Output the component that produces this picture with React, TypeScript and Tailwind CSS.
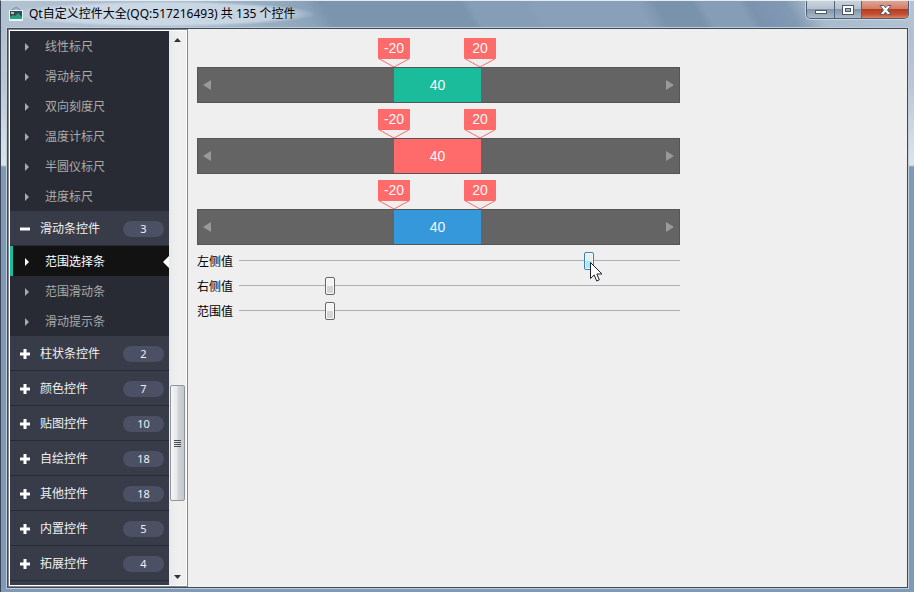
import React from 'react';

type Group = { title: string; count: number; open?: boolean; items?: string[] };

const looseItems = ['线性标尺', '滑动标尺', '双向刻度尺', '温度计标尺', '半圆仪标尺', '进度标尺'];

const groups: Group[] = [
  { title: '滑动条控件', count: 3, open: true, items: ['范围选择条', '范围滑动条', '滑动提示条'] },
  { title: '柱状条控件', count: 2 },
  { title: '颜色控件', count: 7 },
  { title: '贴图控件', count: 10 },
  { title: '自绘控件', count: 18 },
  { title: '其他控件', count: 18 },
  { title: '内置控件', count: 5 },
  { title: '拓展控件', count: 4 },
];

function AppIcon() {
  return (
    <svg width="14" height="14" viewBox="0 0 14 14" className="shrink-0" aria-hidden="true">
      <path d="M1.500 4 6 .8h2L12.500 4" fill="none" stroke="#6c8ba0" strokeWidth="1" />
      <rect x="0" y="3" width="14" height="11" fill="#eef3f5" />
      <rect x="1" y="4" width="12" height="8" fill="#34495e" />
      <rect x="2" y="5" width="3" height="2" fill="#e8c34a" />
      <path d="M1 12v-2l3-2 2 1 3-3 4 4v2z" fill="#1fa67c" />
    </svg>
  );
}

function TitleBar() {
  return (
    <header className="flex h-[26px] shrink-0 items-start justify-between bg-[linear-gradient(60deg,#b3c2d2_0%,#a9bccd_22%,#8ba3ba_34%,#7b95ae_36%,#7b95ae_51%,#869db8_52%,#869db8_58%,#8aa0ba_59%,#8aa0ba_70%,#7a93ad_72%,#7a93ad_76%,#869db7_77%,#869db7_81%,#7b93ae_82%,#8199b3_86%,#a9bccd_89%,#b3c3d2_100%)] pl-2 pr-[5px]">
      <div className="flex h-full items-center gap-1.5 rounded-full bg-[radial-gradient(closest-side,rgba(215,226,238,0.7)_80%,rgba(215,226,238,0))] pr-5 text-xs text-black">
        <AppIcon />
        <h1 className="whitespace-nowrap">Qt自定义控件大全(QQ:517216493) 共 135 个控件</h1>
      </div>
      <div className="flex h-[18px] overflow-hidden rounded-b-[5px] border border-t-0 border-[#4f6074] shadow-[0_0_0_1px_#c9d6e1]">
        <button aria-label="最小化" className="flex w-7 items-center justify-center border-r border-[#52647a] bg-[linear-gradient(#c9d3dd_0%,#b4c1ce_48%,#8496aa_50%,#a9bac9_100%)]">
          <svg width="12" height="18" viewBox="0 0 12 18"><rect x=".5" y="9.500" width="11" height="3" fill="#fff" stroke="#4a586a" /></svg>
        </button>
        <button aria-label="最大化" className="flex w-[27px] items-center justify-center border-r border-[#52647a] bg-[linear-gradient(#c9d3dd_0%,#b4c1ce_48%,#8496aa_50%,#a9bac9_100%)]">
          <svg width="12" height="18" viewBox="0 0 12 18">
            <rect x=".5" y="4.500" width="11" height="9" fill="#fff" stroke="#4a586a" />
            <rect x="3.500" y="7.500" width="5" height="3" fill="#a5b4c4" stroke="#4a586a" />
          </svg>
        </button>
        <button aria-label="关闭" className="flex w-[46px] items-center justify-center bg-[linear-gradient(#e0a593_0%,#d27c66_46%,#b23c21_50%,#c65234_80%,#d98363_100%)]">
          <svg width="13" height="18" viewBox="0 0 13 18">
            <path d="M1 4.500h3.500l2 2.300 2-2.300H12L8.500 9l3.500 4.500H8.500l-2-2.300-2 2.300H1L4.500 9z" fill="#fff" stroke="#565a6c" />
          </svg>
        </button>
      </div>
    </header>
  );
}

function NavItem({ label, active }: { label: string; active?: boolean }) {
  return (
    <button
      aria-current={active ? 'page' : undefined}
      className={
        active
          ? 'flex h-[30px] w-full shrink-0 items-center border-l-3 border-[#1abc9c] bg-[#121212] pl-3 pt-0.5 text-white'
          : 'flex h-[30px] w-full shrink-0 items-center pl-[15px] pt-0.5 text-[#aaaaaa]'
      }
    >
      <svg width="4" height="8" viewBox="0 0 4 8" className="shrink-0" aria-hidden="true"><path d="M0 0l4 4-4 4z" fill="currentColor" /></svg>
      <span className="ml-4 flex-1 text-left">{label}</span>
      {active && (
        <svg width="6" height="12" viewBox="0 0 6 12" aria-hidden="true"><path d="M6 0v12L0 6z" fill="#fff" /></svg>
      )}
    </button>
  );
}

function NavGroup({ group }: { group: Group }) {
  return (
    <section className="shrink-0">
      <button
        aria-expanded={!!group.open}
        className="flex h-[35px] w-full items-center border-b border-[#282b33] bg-[#383b48] pl-2.5 pr-[5px] pt-0.5 text-[#f0f0f0]"
      >
        <svg width="10" height="10" viewBox="0 0 10 10" className="shrink-0" aria-hidden="true">
          <path d={group.open ? 'M0 3.500h10v3H0z' : 'M3.500 0h3v3.500H10v3H6.500V10h-3V6.500H0v-3h3.500z'} fill="#fff" />
        </svg>
        <span className="ml-2.5 flex-1 text-left">{group.title}</span>
        <span className="h-4 w-[41px] rounded-full bg-[#4c5064] text-center text-[11px] leading-4">{group.count}</span>
      </button>
      {group.items?.map((item, i) => <NavItem key={item} label={item} active={i === 0} />)}
    </section>
  );
}

function ScrollBar() {
  return (
    <div aria-hidden="true" className="flex w-[17px] shrink-0 flex-col items-center bg-[linear-gradient(90deg,#e8e9eb,#f0f0f0_50%,#efefef)] pr-px">
      <div className="flex h-[17px] items-center"><svg width="7" height="4" viewBox="0 0 7 4"><path d="M0 4 3.500 0 7 4z" fill="#333" /></svg></div>
      <div className="flex-[339]" />
      <div className="flex w-[15px] flex-[115] flex-col items-center justify-center gap-px rounded-xs border border-[#929599] bg-[linear-gradient(90deg,#f5f5f5_0%,#e6e7e9_45%,#d0d4d8_55%,#c4c8cd_100%)]">
        {[0, 1, 2, 3].map((n) => <i key={n} className="h-px w-[7px] bg-[#4a4d52]" />)}
      </div>
      <div className="flex-[67]" />
      <div className="flex h-[17px] items-center"><svg width="7" height="4" viewBox="0 0 7 4"><path d="M0 0h7L3.500 4z" fill="#333" /></svg></div>
    </div>
  );
}

function Sidebar() {
  return (
    <aside className="flex w-[180px] shrink-0 border border-[#828790] bg-white p-px">
      <nav className="flex min-w-0 flex-1 flex-col overflow-hidden bg-[#282b33]">
        {looseItems.map((item) => <NavItem key={item} label={item} />)}
        {groups.map((group) => <NavGroup key={group.title} group={group} />)}
        <div className="flex-1 bg-[#383b48]" />
      </nav>
      <ScrollBar />
    </aside>
  );
}

function Tag({ value }: { value: number }) {
  return (
    <div className="flex w-8 flex-col">
      <div className="h-5 bg-[#ff6b6b] text-center leading-5">{value}</div>
      <svg width="32" height="9" viewBox="0 0 32 9" aria-hidden="true"><path d="M.5.500h31L16 9z" fill="#efefef" stroke="#ff6b6b" /></svg>
    </div>
  );
}

function RangeBar({ color }: { color: string }) {
  return (
    <div className="font-['Liberation_Sans',Arial,sans-serif] text-sm text-[#f7f7f7]">
      <div className="grid grid-cols-[197fr_87fr_199fr]">
        <div className="col-start-2 -ml-4 -mr-[15px] flex justify-between">
          <Tag value={-20} />
          <Tag value={20} />
        </div>
      </div>
      <div className="grid h-9 grid-cols-[197fr_87fr_199fr] bg-[#646464] shadow-[inset_0_0_0_1px_#555]">
        <div className="flex items-center pl-1.5">
          <svg width="8" height="10" viewBox="0 0 8 10" aria-hidden="true"><path d="M8 0v10L0 5z" fill="#999" /></svg>
        </div>
        <div className={`my-px flex items-center justify-center ${color}`}>40</div>
        <div className="flex items-center justify-end pr-1.5">
          <svg width="8" height="10" viewBox="0 0 8 10" aria-hidden="true"><path d="M0 0v10l8-5z" fill="#999" /></svg>
        </div>
      </div>
    </div>
  );
}

const thumb =
  '[&::-webkit-slider-thumb]:h-[18px] [&::-webkit-slider-thumb]:w-[10px] [&::-webkit-slider-thumb]:appearance-none [&::-webkit-slider-thumb]:rounded-xs [&::-webkit-slider-thumb]:border';
const normalThumb =
  '[&::-webkit-slider-thumb]:border-[#666] [&::-webkit-slider-thumb]:bg-[linear-gradient(#f4f4f4_50%,#d4d5d8_50%)] [&::-webkit-slider-thumb]:shadow-[inset_0_0_0_1px_#fafafa]';
const hotThumb =
  '[&::-webkit-slider-thumb]:border-[#3c7fb1] [&::-webkit-slider-thumb]:bg-[linear-gradient(#e6eff4_50%,#a8e9f5_50%)] [&::-webkit-slider-thumb]:shadow-[inset_0_0_0_1px_#f4fbff]';

function SliderRow({ id, label, value, hot }: { id: string; label: string; value: number; hot?: boolean }) {
  return (
    <div className="flex h-[25px] items-center gap-1.5 text-black">
      <label htmlFor={id} className="shrink-0 pt-0.5">{label}</label>
      <div className="relative flex min-w-0 flex-1">
        <input
          id={id}
          type="range"
          min={0}
          max={100}
          defaultValue={value}
          className={`h-[18px] w-full appearance-none bg-[linear-gradient(#b0b0b0,#b0b0b0)] bg-[length:100%_1px] bg-[position:0_8px] bg-no-repeat ${thumb} ${hot ? hotThumb : normalThumb}`}
        />
        {hot && (
          <svg width="13" height="20" viewBox="0 0 13 20" className="pointer-events-none absolute left-[80%] top-2.5 z-10 -ml-0.5" aria-hidden="true">
            <path d="M.5.500v16l3.700-3.500 2.500 6 2.600-1.100-2.500-5.900h5.200z" fill="#fff" stroke="#1c2233" />
          </svg>
        )}
      </div>
    </div>
  );
}

export default function App() {
  return (
    <div className="flex h-screen flex-col overflow-hidden border-l border-t border-l-[#3b4656] border-t-[#e6ebee] bg-[#8099b7] font-['Noto_Sans','Noto_Sans_CJK_SC',sans-serif] text-xs">
      <TitleBar />
      <div className="flex min-h-0 flex-1 bg-[linear-gradient(#b0c0d0_0,#b9c7d6_60px,#d5dfe8_120px,#dbe4eb_138px,#8099b7_140px,#8099b7_100%)] px-[5px] pb-[3px]">
        <div className="flex min-w-0 flex-1 border border-[#c0ccd8]">
          <div className="flex min-w-0 flex-1 border border-[#3f495a] bg-[#efefef]">
            <Sidebar />
            <main className="min-w-0 flex-1 px-[9px] pt-[9px]">
              <div className="flex max-w-[483px] flex-col">
                <div className="flex flex-col gap-1.5">
                  <RangeBar color="bg-[#1abc9c]" />
                  <RangeBar color="bg-[#ff6b6b]" />
                  <RangeBar color="bg-[#3498db]" />
                </div>
                <div className="mt-[3px]">
                  <SliderRow id="left" label="左侧值" value={80} hot />
                  <SliderRow id="right" label="右侧值" value={20} />
                  <SliderRow id="range" label="范围值" value={20} />
                </div>
              </div>
            </main>
          </div>
        </div>
      </div>
    </div>
  );
}
